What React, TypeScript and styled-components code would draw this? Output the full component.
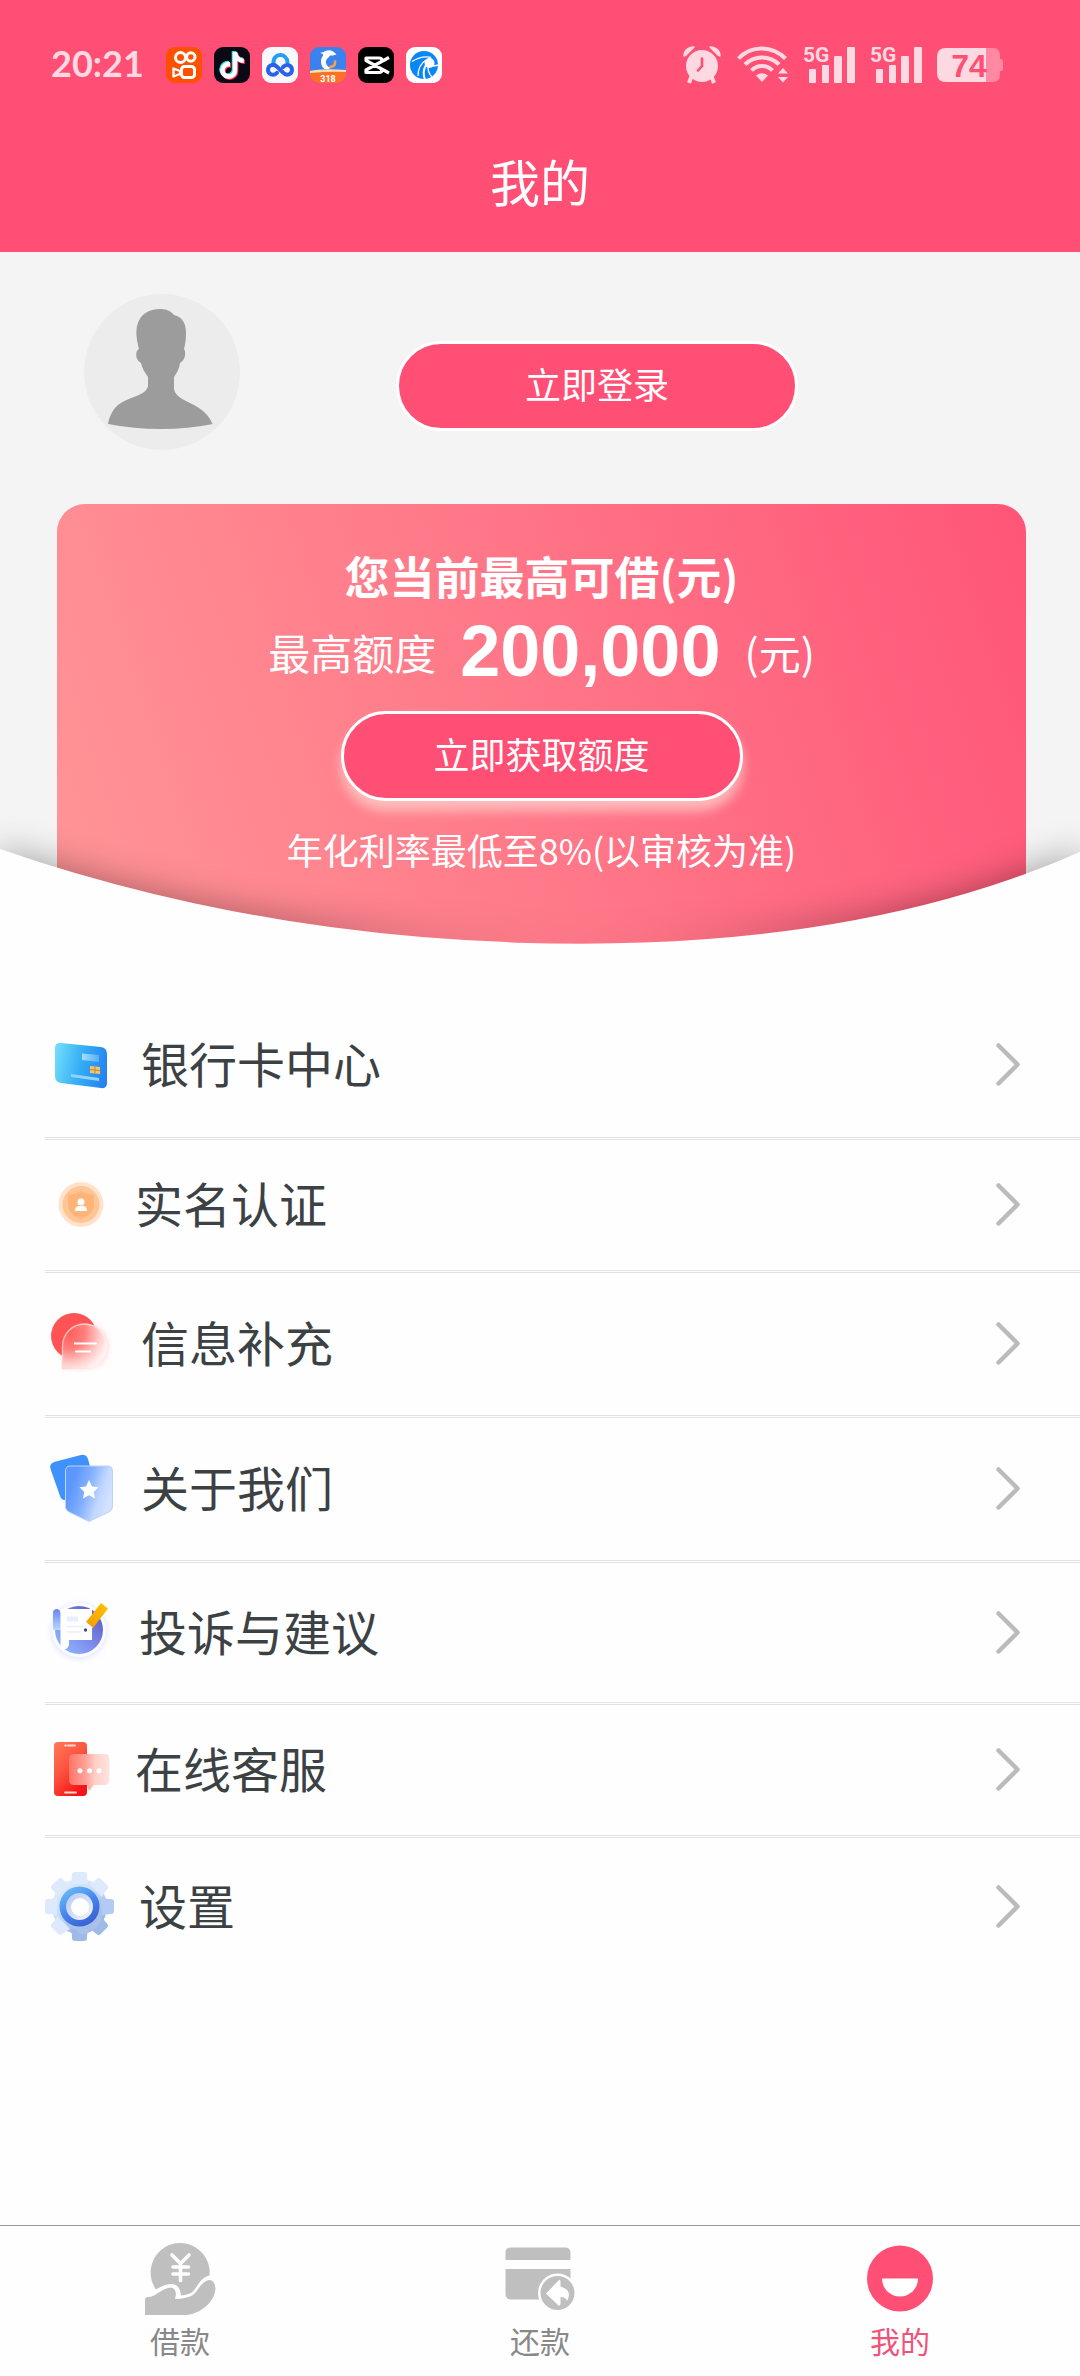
import React from "react";
import styled, { createGlobalStyle } from "styled-components";
import { FaTiktok } from "react-icons/fa6";

const PINK = "#ff4f74";
const STATUS = "#ffd9e1";

const GlobalStyle = createGlobalStyle`
  *, *::before, *::after { box-sizing: border-box; }
  body {
    margin: 0;
    background: #fefefe;
    font-family: "Noto Sans CJK SC", "Noto Sans", sans-serif;
  }
  a { color: inherit; text-decoration: none; }
  button { font: inherit; cursor: pointer; }
`;

const Page = styled.div`
  display: flex;
  flex-direction: column;
  min-height: 100vh;
  background: #fefefe;
`;

const Header = styled.header`
  background: ${PINK};
  color: #fff;
`;

const StatusBar = styled.div`
  display: flex;
  align-items: center;
  justify-content: space-between;
  height: 130px;
  padding: 0 76px 0 51px;
  color: ${STATUS};
`;

const StatusGroup = styled.div<{ $gap: number }>`
  display: flex;
  align-items: center;
  gap: ${(p) => p.$gap}px;
`;

const Clock = styled.time`
  width: 103px;
  padding-bottom: 4px;
  font: 700 36px/40px Lato, sans-serif;
`;

const AppTile = styled.span<{ $bg: string }>`
  position: relative;
  display: block;
  width: 36px;
  height: 36px;
  border-radius: 9px;
  overflow: hidden;
  background: ${(p) => p.$bg};
`;

const NoteLayer = styled(FaTiktok)<{ $x: number; $y: number }>`
  position: absolute;
  left: ${(p) => p.$x}px;
  top: ${(p) => p.$y}px;
  width: 26px;
  height: 27px;
`;

const Glyph = styled.svg`
  display: block;
  flex: none;
  overflow: visible;
`;

const Title = styled.h1`
  margin: 0;
  padding: 11px 0 33px;
  text-align: center;
  font-size: 50px;
  font-weight: 400;
  line-height: 78px;
`;

const Hero = styled.section`
  position: relative;
  padding: 42px 54px 0 57px;
  background: #f4f4f4;
`;

const Profile = styled.div`
  display: flex;
  align-items: center;
  gap: 156px;
  height: 156px;
  padding-left: 27px;
`;

const Pill = styled.button<{ $glow?: boolean }>`
  width: 402px;
  height: 90px;
  padding: 0 0 6px;
  border: 3px solid #fff;
  border-radius: 45px;
  background: ${PINK};
  color: #fff;
  font-size: 36px;
  line-height: 54px;
  box-shadow: ${(p) => (p.$glow ? "0 10px 12px rgba(255, 205, 200, 0.8)" : "none")};
`;

const LoginSlot = styled.div`
  padding-top: 28px;
`;

const QuotaCard = styled.div`
  display: flex;
  flex-direction: column;
  align-items: center;
  height: 441px;
  margin-top: 54px;
  padding-top: 39px;
  border-radius: 28px 28px 0 0;
  background: linear-gradient(72deg, #ff9597 0%, #ff7788 50%, #ff5577 100%);
  color: #fff;
`;

const QuotaTitle = styled.h2`
  margin: 0;
  font-size: 45px;
  font-weight: 700;
  line-height: 66px;
`;

const QuotaRow = styled.p`
  display: flex;
  align-items: center;
  gap: 24px;
  margin: 0 0 17px;
  font-size: 42px;
  line-height: 85px;
`;

const Amount = styled.strong`
  font: 700 72px/85px "Liberation Sans", sans-serif;
`;

const Rate = styled.p`
  margin: 21px 0 0;
  font-size: 36px;
  line-height: 54px;
`;

const Curve = styled.svg`
  position: absolute;
  left: 0;
  bottom: 0;
  width: 100%;
  height: 96px;
  overflow: visible;
  pointer-events: none;
  filter: drop-shadow(0 0 18px rgba(0, 0, 0, 0.36));
`;

const HeroClip = styled.div`
  overflow: hidden;
`;

const Menu = styled.ul`
  margin: 0;
  padding: 48px 0 0 45px;
  list-style: none;
`;

const MenuItem = styled.li`
  & + & { border-top: 3px double #e2e2e2; }
`;

const MenuLink = styled.a`
  display: flex;
  align-items: center;
  gap: 24px;
  padding: 36px 60px 36px 0;
  color: #3c4144;
`;

const MenuLabel = styled.span`
  flex: 1;
  padding-bottom: 6px;
  font-size: 48px;
  line-height: 52px;
`;

const TabBar = styled.nav`
  display: grid;
  grid-template-columns: repeat(3, 1fr);
  margin-top: auto;
  padding: 17px 0 11px;
  border-top: 1px solid #999;
`;

const Tab = styled.a<{ $active?: boolean }>`
  display: flex;
  flex-direction: column;
  align-items: center;
  color: ${(p) => (p.$active ? "#f0527a" : "#888")};
  font-size: 30px;
  line-height: 50px;
`;

function AppIcons() {
  return (
    <>
      <AppTile $bg="#ff5000">
        <Glyph width="36" height="36" viewBox="0 0 36 36" fill="none" stroke="#fff" strokeWidth="3">
          <circle cx="14.5" cy="10.5" r="5" />
          <circle cx="24.8" cy="10" r="4.2" />
          <rect x="15.5" y="19.5" width="13" height="11" rx="3" />
          <path d="M7.5 21.5 L14 24 V27 L7.5 29.5 Z" strokeWidth="2.4" strokeLinejoin="round" />
        </Glyph>
      </AppTile>
      <AppTile $bg="#0b0a14">
        <NoteLayer $x={4} $y={4} color="#2de3dc" />
        <NoteLayer $x={6} $y={6} color="#fb3158" />
        <NoteLayer $x={5} $y={5} color="#fff" />
      </AppTile>
      <AppTile $bg="#f8f8fa">
        <Glyph width="36" height="36" viewBox="0 0 36 36" fill="none" strokeWidth="4" strokeLinecap="round">
          <path d="M11.500 16 C11 5.500 25 5.500 25.500 15.500" stroke="#1fa0f4" />
          <path d="M21 20 C25 16 30 18.500 30 22.800 C30 27.500 24.500 29.500 21 25.500 L15 19.800 C11 16 6 18.500 6 22.800 C6 27.500 11.500 29.500 15 25.800" stroke="#2a63ea" />
        </Glyph>
      </AppTile>
      <AppTile $bg="#3b82ee">
        <Glyph width="36" height="36" viewBox="0 0 36 36">
          <path d="M0 24 Q12 21 36 23 V28 H0 Z" fill="#ffe0a8" />
          <path d="M0 26 Q20 24 36 25 V36 H0 Z" fill="#ff6f2a" />
          <path d="M25 13.500 Q26 20 19.500 20" fill="none" stroke="#f5a34a" strokeWidth="2.600" />
          <path d="M13 7 L10 6 L13.500 5 Q17 2.500 21 3.500 Q24 4.500 26.500 7.500 L23 8.500 L20 8.500 L18.500 10.500 Q14.500 13.500 16.500 17.500 Q17.500 19.500 20.500 21 Q15 24 12.500 20 Q9 14 13 8.500 Z" fill="#fff" />
          <text x="18" y="34.500" fill="#fff" fontSize="9" fontWeight="700" fontFamily="Roboto, sans-serif" textAnchor="middle">318</text>
        </Glyph>
      </AppTile>
      <AppTile $bg="#000">
        <Glyph width="36" height="36" viewBox="0 0 36 36" fill="none" stroke="#fff" strokeWidth="3.200">
          <path d="M31 10.500 L8 23 V25.500 H21 Q24 25.500 24 23 M31 26 L8 13.500 V11 H21 Q24 11 24 13.500" strokeLinejoin="round" />
        </Glyph>
      </AppTile>
      <AppTile $bg="#fff">
        <Glyph width="36" height="36" viewBox="0 0 36 36">
          <circle cx="18" cy="18" r="14" fill="#0a86f7" />
          <circle cx="23.500" cy="16" r="5" fill="#fff" />
          <g fill="none" stroke="#fff" strokeWidth="1.300">
            <path d="M25 10.500 Q16 8 6 14.500" />
            <path d="M20 13 Q12 18 12 29" />
            <path d="M20 18 Q16 24 19 33" strokeWidth="2" />
            <path d="M22 20 Q22 26 26 30" />
            <path d="M27 19 L33 18" />
          </g>
        </Glyph>
      </AppTile>
    </>
  );
}

function Alarm() {
  return (
    <Glyph width="38" height="38" viewBox="0 0 38 38">
      <path d="M9 29 L6 37 M28 29 L31 37" stroke={STATUS} strokeWidth="4" />
      <circle cx="19" cy="20" r="16" fill={STATUS} />
      <path d="M1 10 A9 9 0 0 1 11 1 L3 9 Z M27 1 A9 9 0 0 1 37 10 L35 9 Z" fill={STATUS} stroke={STATUS} strokeWidth="1.500" strokeLinejoin="round" />
      <path d="M19 12.500 V20 L15 24.500" fill="none" stroke={PINK} strokeWidth="2.600" strokeLinecap="round" />
    </Glyph>
  );
}

function Wifi() {
  return (
    <Glyph width="52" height="38" viewBox="0 0 52 38">
      <g fill="none" stroke={STATUS} strokeWidth="4">
        <path d="M2.500 12.500 C15 -1 36 -1 49.500 12.500" />
        <path d="M9 18.500 C18 9 34 9 43 18.500" />
        <path d="M15.500 24.500 C21 18.500 31 18.500 36.500 24.500" />
      </g>
      <path d="M20 29.500 Q26 25 32 29.500 L26 36 Z M42 27.500 L47 22 L52 27.500 Z M42 31 H52 L47 36.500 Z" fill={STATUS} />
    </Glyph>
  );
}

function Signal() {
  return (
    <Glyph width="52" height="38" viewBox="0 0 52 38" fill={STATUS}>
      <text x="0" y="16" fontSize="21" fontWeight="700" fontFamily="Roboto, sans-serif">5G</text>
      <rect x="6" y="23" width="7" height="14" rx="1" />
      <rect x="19" y="19" width="7" height="18" rx="1" />
      <rect x="31" y="10" width="8" height="27" rx="1" />
      <rect x="44" y="1" width="8" height="36" rx="1" />
    </Glyph>
  );
}

function Battery() {
  return (
    <Glyph width="67" height="34" viewBox="0 0 67 34">
      <path d="M49 0 H56 Q63 0 63 8 V11 Q66 11 66 13 V21 Q66 23 63 23 V26 Q63 34 56 34 H49 Z" fill="#ff89a3" />
      <path d="M49 0 H9 Q0 0 0 9 V25 Q0 34 9 34 H49 Z" fill={STATUS} />
      <text x="32" y="29" fontSize="32" fontWeight="700" fontFamily="Liberation Sans, sans-serif" textAnchor="middle" fill={PINK}>74</text>
    </Glyph>
  );
}

function Avatar() {
  return (
    <Glyph width="156" height="156" viewBox="0 0 156 156" role="img" aria-label="头像">
      <circle cx="78" cy="78" r="78" fill="#ececec" />
      <path
        fill="#9c9c9c"
        d="M76 15 C82 15 87 17 90 21 C99 23 102 30 102 39 C102 46 101 51 100 55 C102 57 102 66 96 69 C95 76 92 80 90 83 V95 C92 107 112 108 122 120 C127 125 128 130 129 130 Q104 135 77 135 Q50 135 24 130 C25 124 28 116 34 111 C46 102 62 102 64 92 V83 C61 79 58 74 57 69 C51 66 51 57 55 55 C52 44 52 37 53 32 C56 20 65 15 76 15 Z"
      />
    </Glyph>
  );
}

function BankCardIcon() {
  return (
    <Glyph width="72" height="72" viewBox="0 0 72 72">
      <defs>
        <linearGradient id="bank" x1="0" y1="0.3" x2="1" y2="0.5">
          <stop offset="0" stopColor="#6fdcfa" />
          <stop offset="0.5" stopColor="#35aef4" />
          <stop offset="1" stopColor="#2684f0" />
        </linearGradient>
        <linearGradient id="bankChip" x1="0" x2="1">
          <stop offset="0" stopColor="#a5defc" />
          <stop offset="1" stopColor="#55aef8" />
        </linearGradient>
      </defs>
      <path d="M16 14 L56 18 Q62 19 62 25 V54 Q62 60 56 59 L16 54 Q10 53 10 47 V19 Q10 13.500 16 14 Z" fill="url(#bank)" />
      <path d="M37 24.500 L54 26 V33 L37 31 Z" fill="url(#bankChip)" />
      <path d="M45 37 L55 38 V45 L45 44 Z" fill="#f4c468" />
      <path d="M45 40.500 L55 41.500 M50 37.500 V44.500" stroke="#b98b48" strokeWidth="1" />
      <path d="M26 45 L54 49 V52 L26 48 Z" fill="#8fd4fd" />
    </Glyph>
  );
}

function IdentityIcon() {
  return (
    <Glyph width="66" height="58" viewBox="0 0 66 58">
      <circle cx="36" cy="28.500" r="22.500" fill="#fee3cc" />
      <circle cx="36" cy="28.500" r="18.500" fill="#ffc594" />
      <path d="M36 15 Q42 18.500 49 18.500 V29 Q49 38 36 43 Q23 38 23 29 V18.500 Q30 18.500 36 15 Z" fill="#ffb478" />
      <circle cx="36" cy="26" r="3.500" fill="#fff" />
      <path d="M30 35 Q30 30 34 30 H38 Q42 30 42 35 Z" fill="#fff" />
    </Glyph>
  );
}

function InfoIcon() {
  return (
    <Glyph width="72" height="70" viewBox="0 0 72 70">
      <defs>
        <radialGradient id="infoFade" cx="0.15" cy="0.2" r="0.9">
          <stop offset="0" stopColor="#ff5f5c" />
          <stop offset="0.4" stopColor="#ff7f7b" />
          <stop offset="0.75" stopColor="#ffc9c6" />
          <stop offset="1" stopColor="#fff0ef" />
        </radialGradient>
        <linearGradient id="infoEdge" x1="0" y1="0" x2="1" y2="0.6">
          <stop offset="0" stopColor="#ffb9b6" />
          <stop offset="1" stopColor="#fff3f2" />
        </linearGradient>
        <filter id="infoBlur"><feGaussianBlur stdDeviation="3" /></filter>
      </defs>
      <path d="M20 38 Q20 16 40 16 Q61 18 62 38 Q60 58 40 58 H20 Z" fill="#ffc4c2" filter="url(#infoBlur)" />
      <circle cx="29" cy="27" r="23" fill="#ff5355" />
      <path d="M17.500 59.500 V37 A22 22 0 0 1 61.500 37 A22 22 0 0 1 42 59.500 Z" fill="url(#infoFade)" stroke="url(#infoEdge)" strokeWidth="1.300" />
      <path d="M30 34.500 H51 M31 42.500 H45" stroke="#fff" strokeWidth="2.200" strokeLinecap="round" />
    </Glyph>
  );
}

function AboutIcon() {
  return (
    <Glyph width="72" height="70" viewBox="0 0 72 70">
      <defs>
        <linearGradient id="about" x1="0.1" y1="0.4" x2="0.9" y2="0.7">
          <stop offset="0" stopColor="#5b97ff" />
          <stop offset="0.4" stopColor="#85b1ff" />
          <stop offset="0.75" stopColor="#c2d7ff" />
          <stop offset="1" stopColor="#d3e2ff" />
        </linearGradient>
      </defs>
      <path d="M9 8 L36 1 Q41 0 43 5 L52 38 L23 45 Q17 48 15 42 L5.500 15 Q4 10 9 8 Z" fill="#3f92fc" />
      <path d="M25 12 H63 Q67.500 12 67.500 17 V53 Q67.500 56 64 58 L44 67.500 L24 58 Q20.500 56 20.500 53 V17 Q20.500 12 25 12 Z" fill="url(#about)" stroke="#bcd3ff" strokeWidth="1" />
      <path d="M44 26 L47 32.500 L53.500 33.300 L48.700 38 L50 44.500 L44 41.300 L38 44.500 L39.300 38 L34.500 33.300 L41 32.500 Z" fill="#fff" />
    </Glyph>
  );
}

function FeedbackIcon() {
  return (
    <Glyph width="70" height="67" viewBox="0 0 70 67">
      <defs>
        <linearGradient id="fb" x1="1" y1="0.2" x2="0.2" y2="1">
          <stop offset="0" stopColor="#5d5cc0" />
          <stop offset="0.55" stopColor="#7f8fee" />
          <stop offset="1" stopColor="#8fb4fb" />
        </linearGradient>
        <linearGradient id="fbRoll" x1="0" y1="0" x2="0" y2="1">
          <stop offset="0" stopColor="#6a86f5" />
          <stop offset="1" stopColor="#b9d6ff" />
        </linearGradient>
        <linearGradient id="fbPen" x1="1" y1="0" x2="0" y2="1">
          <stop offset="0" stopColor="#ffc400" />
          <stop offset="1" stopColor="#f59a00" />
        </linearGradient>
        <filter id="fbGlow"><feGaussianBlur stdDeviation="2" /></filter>
      </defs>
      <circle cx="34" cy="32" r="29" fill="#e9edff" filter="url(#fbGlow)" />
      <circle cx="34" cy="31" r="27" fill="#fbfcff" />
      <circle cx="34" cy="31" r="24" fill="url(#fb)" />
      <path d="M8 31 V14 Q8 10 12 10 Q16 10 16 14 V31 Z" fill="url(#fbRoll)" />
      <path d="M13 10 H47 V41 H24 V46 Q22 51 18 50.500 Q15 50 15.500 44 V15 Q15.500 11 13 10 Z" fill="#fff" />
      <path d="M22 20 H33" stroke="#e8effc" strokeWidth="5" />
      <path d="M22 27.500 H39 M22 33 H36" stroke="#eceef7" strokeWidth="1.500" />
      <path d="M56 4 L63 9.500 L48 29 L41 23 Z" fill="url(#fbPen)" />
      <path d="M41 23 L48 29 L40 32 Z" fill="#fff" />
      <circle cx="40.500" cy="31" r="1.700" fill="#4a4680" />
    </Glyph>
  );
}

function ServiceIcon() {
  return (
    <Glyph width="66" height="58" viewBox="0 0 66 58">
      <defs>
        <linearGradient id="phone" x1="0" y1="0" x2="0.6" y2="1">
          <stop offset="0" stopColor="#ff7a58" />
          <stop offset="0.5" stopColor="#fc5440" />
          <stop offset="1" stopColor="#f51418" />
        </linearGradient>
        <linearGradient id="chat" x1="0" x2="1">
          <stop offset="0" stopColor="#ff7468" />
          <stop offset="0.4" stopColor="#ffa196" />
          <stop offset="0.65" stopColor="#ffcfc9" />
          <stop offset="1" stopColor="#ffe3df" />
        </linearGradient>
      </defs>
      <rect x="9" y="1" width="33" height="54" rx="4" fill="url(#phone)" />
      <path d="M20 4.500 H21 M23 4.500 H30 M20 51.500 H31" stroke="#ffd9d0" strokeWidth="1.800" strokeLinecap="round" />
      <path d="M29 13 H59 Q64.500 13 64.500 18 V39 Q64.500 44 59 44 H49 L44 50 L42 44 H29 Q24 44 24 39 V18 Q24 13 29 13 Z" fill="url(#chat)" />
      <g fill="#fff">
        <circle cx="35" cy="29.700" r="2.500" />
        <circle cx="44.500" cy="29.700" r="2.500" />
        <circle cx="54" cy="29.700" r="2.500" />
      </g>
    </Glyph>
  );
}

function GearIcon() {
  return (
    <Glyph width="70" height="66" viewBox="0 0 70 66">
      <defs>
        <linearGradient id="gear" x1="0" y1="0" x2="0.7" y2="1">
          <stop offset="0" stopColor="#e8f1ff" />
          <stop offset="0.5" stopColor="#c9dcf8" />
          <stop offset="1" stopColor="#88a9de" />
        </linearGradient>
        <linearGradient id="gearRing" x1="0" y1="0" x2="0.6" y2="1">
          <stop offset="0" stopColor="#6fc8f8" />
          <stop offset="0.6" stopColor="#4684ee" />
          <stop offset="1" stopColor="#3a63d2" />
        </linearGradient>
        <linearGradient id="gearHole" x1="0" y1="0" x2="1" y2="1">
          <stop offset="0" stopColor="#b4c7f0" />
          <stop offset="1" stopColor="#f2f6ff" />
        </linearGradient>
      </defs>
      <g fill="url(#gear)">
        <circle cx="34.500" cy="32.500" r="27.500" />
        {[0, 45, 90, 135, 180, 225, 270, 315].map((a) => (
          <path
            key={a}
            d="M25 10 Q27 7 27 1 Q27 -2 30 -2 H39 Q42 -2 42 1 Q42 7 44 10 Z"
            transform={`rotate(${a} 34.5 32.5)`}
            fill={a > 100 && a < 200 ? "#9fbae6" : a > 80 && a <= 100 ? "#b3cbf2" : "#dde9fc"}
          />
        ))}
      </g>
      <path d="M49 19 L59 29 Q60 46 48 56 Q42 60 36 60 L22 48 Z" fill="#b3c9ef" opacity="0.5" />
      <circle cx="34.500" cy="32.500" r="20" fill="url(#gearRing)" />
      <circle cx="34.500" cy="32.500" r="13.500" fill="url(#gearHole)" />
      <circle cx="35" cy="33" r="9" fill="#fff" />
    </Glyph>
  );
}

function Chevron() {
  return (
    <Glyph width="24" height="44" viewBox="0 0 24 44" fill="none">
      <path d="M2.500 2.500 L21.500 21.500 L2.500 40.500" stroke="#bbb" strokeWidth="4.500" strokeLinecap="round" strokeLinejoin="round" />
    </Glyph>
  );
}

function BorrowIcon() {
  return (
    <Glyph width="72" height="72" viewBox="0 0 72 72">
      <path d="M12 46.500 A29.500 29.500 0 1 1 65.500 32.500 C55 35 53 46 47 50 Q42 52 37 52.500 Q36 41 27 41 Q21 41 12 46.500 Z" fill="#bfbfbf" />
      <path d="M28 12 L36.500 20.500 L45 12 M36.500 20.500 V37.500 M29 24 H44.500 M29 31 H44.500" fill="none" stroke="#fff" strokeWidth="3.600" strokeLinecap="round" />
      <path d="M1 57 Q1 54 4 54 C12 54 16 46 27 44.500 Q34 46 31 56 Q42 56 49 52 C55 47 57 38 66 37 Q71 38 71.500 46 C70 60 57 70 43 72 H1 Z" fill="#bfbfbf" />
    </Glyph>
  );
}

function RepayIcon() {
  return (
    <Glyph width="72" height="72" viewBox="0 0 72 72">
      <path d="M1.500 17 V10 Q1.500 4.500 7 4.500 H61 Q66.500 4.500 66.500 10 V17 Z M1.500 26 H66.500 V50 H48 V56.500 H7 Q1.500 56.500 1.500 51 Z" fill="#bfbfbf" />
      <circle cx="53.500" cy="50" r="19.500" fill="#fefefe" />
      <circle cx="53.500" cy="50" r="17" fill="#bfbfbf" />
      <path d="M42 50.500 L55 37 Q56.500 36 56.500 39 V43.500 Q69 47 63 58 Q62 54 56.500 54 V61 Q56 64 54 62 Z" fill="#fff" />
    </Glyph>
  );
}

function MineIcon() {
  return (
    <Glyph width="72" height="72" viewBox="0 0 72 72">
      <circle cx="36" cy="35.500" r="33" fill={PINK} />
      <path d="M18 35.500 H54 A18 18 0 0 1 18 35.500 Z" fill="#fff" />
    </Glyph>
  );
}

const menu = [
  { label: "银行卡中心", Icon: BankCardIcon },
  { label: "实名认证", Icon: IdentityIcon },
  { label: "信息补充", Icon: InfoIcon },
  { label: "关于我们", Icon: AboutIcon },
  { label: "投诉与建议", Icon: FeedbackIcon },
  { label: "在线客服", Icon: ServiceIcon },
  { label: "设置", Icon: GearIcon },
];

const tabs = [
  { label: "借款", Icon: BorrowIcon },
  { label: "还款", Icon: RepayIcon },
  { label: "我的", Icon: MineIcon, active: true },
];

export default function App() {
  return (
    <Page>
      <GlobalStyle />
      <Header>
        <StatusBar>
          <StatusGroup $gap={12}>
            <Clock>20:21</Clock>
            <AppIcons />
          </StatusGroup>
          <StatusGroup $gap={15}>
            <Alarm />
            <Wifi />
            <Signal />
            <Signal />
            <Battery />
          </StatusGroup>
        </StatusBar>
        <Title>我的</Title>
      </Header>

      <main>
        <HeroClip>
          <Hero>
            <Profile>
              <Avatar />
              <LoginSlot>
                <Pill type="button">立即登录</Pill>
              </LoginSlot>
            </Profile>
            <QuotaCard>
              <QuotaTitle>您当前最高可借(元)</QuotaTitle>
              <QuotaRow>
                <span>最高额度</span>
                <Amount>200,000</Amount>
                <span>(元)</span>
              </QuotaRow>
              <Pill type="button" $glow>立即获取额度</Pill>
              <Rate>年化利率最低至8%(以审核为准)</Rate>
            </QuotaCard>
            <Curve viewBox="0 0 1080 96" preserveAspectRatio="none" aria-hidden="true">
              <path d="M0 0 Q274 94.700 582 94.700 Q872 94.700 1080 3 V96 H0 Z" fill="#fefefe" />
            </Curve>
          </Hero>
        </HeroClip>

        <Menu>
          {menu.map(({ label, Icon }) => (
            <MenuItem key={label}>
              <MenuLink href="#">
                <Icon />
                <MenuLabel>{label}</MenuLabel>
                <Chevron />
              </MenuLink>
            </MenuItem>
          ))}
        </Menu>
      </main>

      <TabBar>
        {tabs.map(({ label, Icon, active }) => (
          <Tab key={label} href="#" $active={active} aria-current={active ? "page" : undefined}>
            <Icon />
            {label}
          </Tab>
        ))}
      </TabBar>
    </Page>
  );
}
